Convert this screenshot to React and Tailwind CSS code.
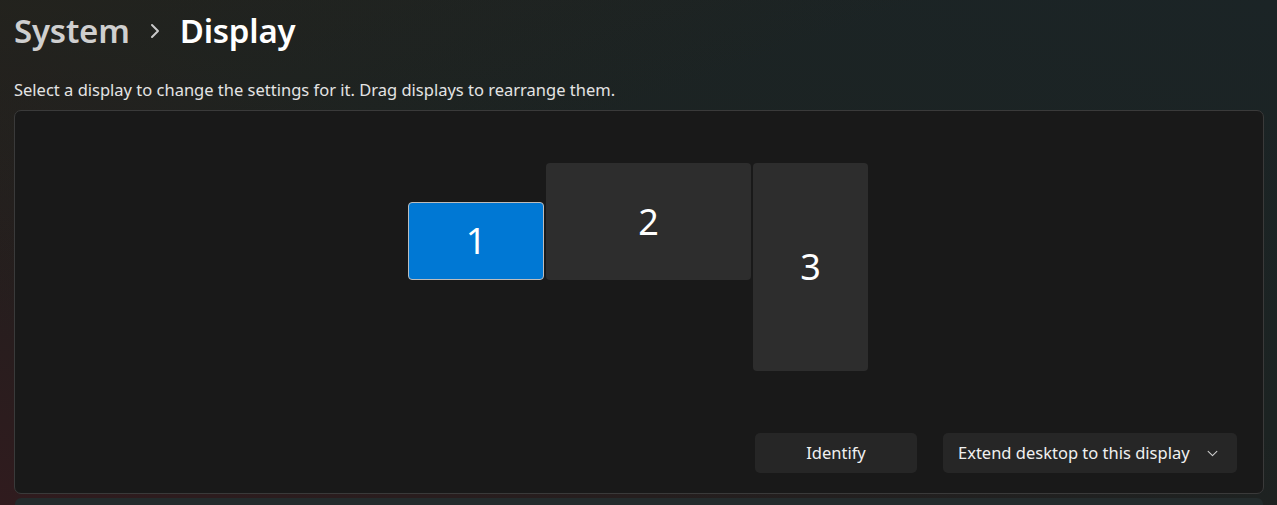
import React from "react";

const font = { fontFamily: '"Noto Sans", "Open Sans", sans-serif' };

function Chevron({ className }) {
  return (
    <svg className={className} viewBox="0 0 10 16" fill="none">
      <path d="M2 2 L8 8 L2 14" stroke="currentColor" strokeWidth="2" strokeLinecap="round" strokeLinejoin="round" />
    </svg>
  );
}

function Down({ className }) {
  return (
    <svg className={className} viewBox="0 0 12 8" fill="none">
      <path d="M1 1.5 L6 6.5 L11 1.5" stroke="currentColor" strokeWidth="1.2" strokeLinecap="round" strokeLinejoin="round" />
    </svg>
  );
}

export default function App() {
  return (
    <div
      className="w-[1277px] h-[505px] overflow-hidden text-white bg-[linear-gradient(200deg,#1b2426_0%,#1c2322_45%,#251e1e_75%,#301b1e_100%)]"
      style={font}
    >
      <div className="h-full bg-[linear-gradient(160deg,rgba(40,34,26,0.55)_0%,rgba(30,34,30,0)_35%)]">
        <div className="flex items-center pl-[14px] pt-[12px] h-[50px]">
          <span className="text-[33px] leading-[44px] font-semibold text-[#cfcfcf] tracking-[-0.2px]">System</span>
          <Chevron className="w-[10px] h-[16px] ml-[20px] mr-[20px] text-[#c9c9c9]" />
          <span className="text-[33px] leading-[44px] font-semibold text-white tracking-[-0.2px]">Display</span>
        </div>
        <div className="pl-[14px] mt-[29px] text-[16.5px] leading-[22px] text-[#e4e4e4]">
          Select a display to change the settings for it. Drag displays to rearrange them.
        </div>
        <div className="relative ml-[14px] mt-[9px] w-[1250px] h-[384px] rounded-[7px] border border-[#3a3a3a] bg-[#191919] flex flex-col">
          <div className="relative flex-1">
            <div className="absolute left-[393px] top-[91px] w-[136px] h-[78px] rounded-[4px] bg-[#0078d4] border border-[#bdbdbd] flex items-center justify-center text-[36px] leading-none">
              1
            </div>
            <div className="absolute left-[531px] top-[52px] w-[205px] h-[117px] rounded-[4px] bg-[#2d2d2d] flex items-center justify-center text-[36px] leading-none">
              2
            </div>
            <div className="absolute left-[738px] top-[52px] w-[115px] h-[208px] rounded-[4px] bg-[#2d2d2d] flex items-center justify-center text-[36px] leading-none">
              3
            </div>
          </div>
          <div className="flex justify-end gap-[26px] pr-[26px] pb-[20px]">
            <div className="w-[162px] h-[40px] rounded-[5px] bg-[#262626] flex items-center justify-center text-[16.5px] text-[#f0f0f0]">
              Identify
            </div>
            <div className="w-[294px] h-[40px] rounded-[5px] bg-[#262626] flex items-center pl-[15px] pr-[19px] text-[16.5px] text-[#f0f0f0]">
              <span className="flex-1">Extend desktop to this display</span>
              <Down className="w-[11px] h-[7px] text-[#cfcfcf]" />
            </div>
          </div>
        </div>
        <div className="ml-[15px] mt-[4px] w-[1248px] h-[20px] rounded-[6px] bg-[#232b2c]" />
      </div>
    </div>
  );
}
